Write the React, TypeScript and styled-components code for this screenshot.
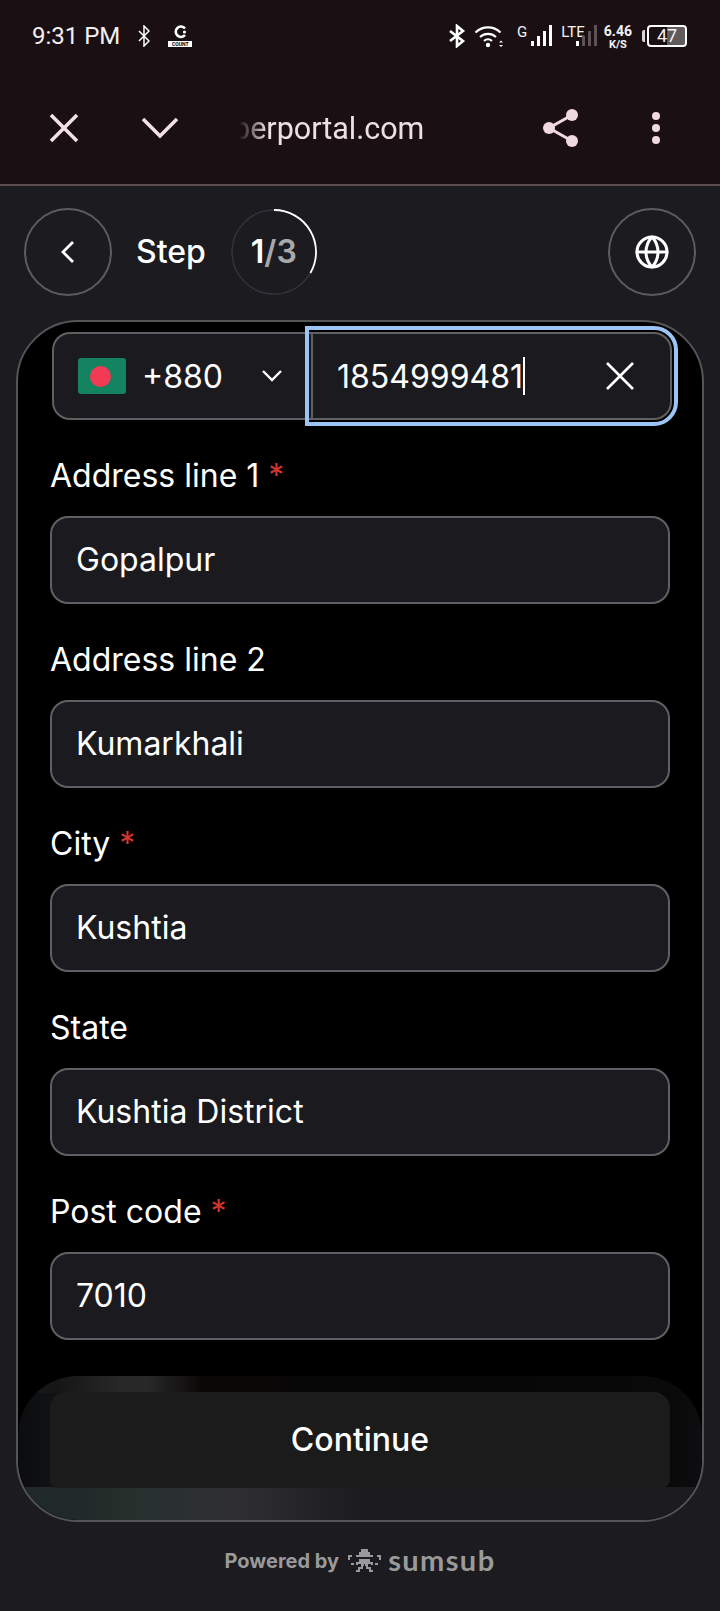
import React from "react";
import styled, { createGlobalStyle } from "styled-components";
import { Globe } from "lucide-react";

const GlobalStyle = createGlobalStyle`
  html, body {
    margin: 0;
    padding: 0;
    background: #1b1b20;
  }
  * {
    box-sizing: border-box;
  }
`;

const fields = [
  { label: "Address line 1", value: "Gopalpur", required: true },
  { label: "Address line 2", value: "Kumarkhali", required: false },
  { label: "City", value: "Kushtia", required: true },
  { label: "State", value: "Kushtia District", required: false },
  { label: "Post code", value: "7010", required: true },
];

const SignalBars = ({ dim }: { dim?: boolean }) => (
  <svg width="22" height="22" viewBox="0 0 22 22">
    <rect x="0" y="16" width="3" height="5" fill="#fff" />
    <rect x="6" y="11" width="3" height="10" fill={dim ? "#5c5356" : "#fff"} />
    <rect x="12" y="6" width="3" height="15" fill={dim ? "#5c5356" : "#fff"} />
    <rect x="18" y="0" width="3" height="21" fill={dim ? "#5c5356" : "#fff"} />
  </svg>
);

const SumsubMark = () => (
  <svg width="33" height="24" viewBox="0 0 33 24" fill="#9a9a9a">
    <path d="M13 0h7v3h2v3h3v2H8V6h3V3h2z" />
    <path d="M0 6h4v2H2v3H0zM29 6h4v5h-2V8h-2z" />
    <path d="M11 10h11v3h3v3h-2v-1h-3v3h3v3h2v2h-4v-3h-3v-3h-1v-2h-1v2h-1v3h-3v3H8v-2h2v-3h3v-3h-3v1H8v-3h3z" />
    <path d="M3 14h3v2H3zM27 14h3v2h-3z" />
  </svg>
);

const App: React.FC = () => {
  return (
    <Page>
      <GlobalStyle />
      <TopChrome>
        <StatusBar>
          <StatusGroup>
            <Clock>9:31 PM</Clock>
            <svg width="12" height="22" viewBox="0 0 12 22" fill="none">
              <path d="M1 6l10 10-5 5V1l5 5L1 16" stroke="#fff" strokeWidth="1.5" />
            </svg>
            <CountBadge>
              <svg width="16" height="14" viewBox="0 0 16 14" fill="none">
                <path d="M13 3.5A5.2 5.2 0 1 0 13 10" stroke="#fff" strokeWidth="2.6" />
                <circle cx="12.5" cy="7" r="1.6" fill="#fff" />
              </svg>
              <CountLabel>COUNT</CountLabel>
            </CountBadge>
          </StatusGroup>
          <StatusGroup $right>
            <svg width="18" height="24" viewBox="0 0 18 24" fill="none">
              <path d="M2 7l13 10-6 5V2l6 5L2 17" stroke="#fff" strokeWidth="2.6" />
            </svg>
            <svg width="30" height="24" viewBox="0 0 30 24" fill="none">
              <path d="M1.5 8.5a18 18 0 0 1 25 0" stroke="#fff" strokeWidth="2.2" />
              <path d="M6 13a12 12 0 0 1 16 0" stroke="#fff" strokeWidth="2.2" />
              <path d="M10 17a6 6 0 0 1 8 0" stroke="#fff" strokeWidth="2.2" />
              <circle cx="14" cy="21" r="2.2" fill="#fff" />
              <path d="M27 16.5l2 2h-4zM25 21h4l-2 2z" fill="#fff" />
            </svg>
            <NetworkItem $gap={4} $offset={5}>
              <NetworkName>G</NetworkName>
              <SignalBars />
            </NetworkItem>
            <NetworkItem $gap={-9} $offset={0}>
              <NetworkName>LTE</NetworkName>
              <SignalBars dim />
            </NetworkItem>
            <Speed>
              <SpeedValue>6.46</SpeedValue>
              <SpeedUnit>K/S</SpeedUnit>
            </Speed>
            <Battery>
              <BatteryLevel>47</BatteryLevel>
            </Battery>
          </StatusGroup>
        </StatusBar>
        <BrowserBar>
          <BrowserIcon $width={92}>
            <svg width="30" height="30" viewBox="0 0 30 30" fill="none">
              <path d="M2 2l26 26M28 2L2 28" stroke="#f5e1e5" strokeWidth="3.6" />
            </svg>
          </BrowserIcon>
          <BrowserIcon $width={52}>
            <svg width="38" height="24" viewBox="0 0 38 24" fill="none">
              <path d="M2 3l17 17L36 3" stroke="#f5e1e5" strokeWidth="3.6" />
            </svg>
          </BrowserIcon>
          <UrlBox>
            <UrlText>perportal.com</UrlText>
          </UrlBox>
          <BrowserIcon $width={38}>
            <svg width="38" height="40" viewBox="0 0 38 40" fill="none">
              <path d="M30 7L7 20l23 13" stroke="#f0d9df" strokeWidth="3" />
              <circle cx="30" cy="7" r="6" fill="#f0d9df" />
              <circle cx="7" cy="20" r="6" fill="#f0d9df" />
              <circle cx="30" cy="33" r="6" fill="#f0d9df" />
            </svg>
          </BrowserIcon>
          <KebabSlot>
            <Dot />
            <Dot />
            <Dot />
          </KebabSlot>
        </BrowserBar>
      </TopChrome>

      <StepHeader>
        <RoundButton>
          <svg width="16" height="26" viewBox="0 0 16 26" fill="none">
            <path d="M13 3L3 13l10 10" stroke="#fff" strokeWidth="2.8" />
          </svg>
        </RoundButton>
        <StepLabel>Step</StepLabel>
        <StepRing>
          <RingSvg width="86" height="88" viewBox="0 0 86 88" fill="none">
            <circle cx="43" cy="44" r="42" stroke="#33333a" strokeWidth="1.5" />
            <path d="M43 2A42 42 0 0 1 79.4 65" stroke="#fff" strokeWidth="1.8" />
          </RingSvg>
          <StepCurrent>1</StepCurrent>
          <StepTotal>/3</StepTotal>
        </StepRing>
        <RoundButton $end>
          <Globe size={36} color="#fff" strokeWidth={2} />
        </RoundButton>
      </StepHeader>

      <Card>
        <PhoneRow>
          <CountrySelect>
            <Flag>
              <FlagDisc />
            </Flag>
            <DialCode>+880</DialCode>
            <svg width="22" height="14" viewBox="0 0 22 14" fill="none">
              <path d="M2 2l9 9 9-9" stroke="#fff" strokeWidth="2.4" />
            </svg>
          </CountrySelect>
          <PhoneInput>
            <PhoneNumber>1854999481</PhoneNumber>
            <Caret />
            <svg width="30" height="30" viewBox="0 0 30 30" fill="none">
              <path d="M2 2l26 26M28 2L2 28" stroke="#fff" strokeWidth="2.6" />
            </svg>
          </PhoneInput>
        </PhoneRow>
        {fields.map((field) => (
          <Field key={field.label}>
            <Label>
              {field.label}
              {field.required && <Required>*</Required>}
            </Label>
            <Input>{field.value}</Input>
          </Field>
        ))}
        <ActionDock>
          <ContinueButton>Continue</ContinueButton>
        </ActionDock>
      </Card>

      <PoweredBy>
        <PoweredText>Powered by</PoweredText>
        <SumsubMark />
        <Wordmark>sumsub</Wordmark>
      </PoweredBy>
    </Page>
  );
};

export default App;

const Page = styled.div`
  width: 720px;
  height: 1611px;
  display: flex;
  flex-direction: column;
  overflow: hidden;
  background: #1b1b20;
  color: #fff;
  font-family: Inter, "Liberation Sans", sans-serif;
`;

const TopChrome = styled.div`
  height: 186px;
  flex: none;
  background: #1a1013;
  border-bottom: 2px solid #5a4b4f;
  font-family: Roboto, "Liberation Sans", sans-serif;
`;

const StatusBar = styled.div`
  height: 72px;
  padding: 0 33px 0 32px;
  display: flex;
  align-items: center;
  justify-content: space-between;
`;

const StatusGroup = styled.div<{ $right?: boolean }>`
  display: flex;
  align-items: center;
  gap: ${(p) => (p.$right ? "8px" : "18px")};
`;

const Clock = styled.span`
  font-size: 24px;
  color: #f4f0f1;
`;

const CountBadge = styled.div`
  display: flex;
  flex-direction: column;
  align-items: center;
  gap: 2px;
  width: 24px;
`;

const CountLabel = styled.span`
  width: 24px;
  height: 6px;
  background: #fff;
  color: #000;
  font-size: 5px;
  line-height: 6px;
  font-weight: 700;
  text-align: center;
`;

const NetworkItem = styled.div<{ $gap: number; $offset: number }>`
  display: flex;
  align-items: flex-start;
  height: 22px;
  margin-left: ${(p) => p.$offset}px;

  svg {
    margin-left: ${(p) => p.$gap}px;
  }
`;

const NetworkName = styled.span`
  font-size: 15px;
  line-height: 14px;
  color: #f4f0f1;
`;

const Speed = styled.div`
  display: flex;
  flex-direction: column;
  align-items: center;
  margin-left: -2px;
  font-weight: 700;
  color: #f4f0f1;
`;

const SpeedValue = styled.span`
  font-size: 14px;
  line-height: 16px;
`;

const SpeedUnit = styled.span`
  font-size: 11px;
  line-height: 11px;
`;

const Battery = styled.div`
  position: relative;
  margin-left: 7px;
  width: 40px;
  height: 22px;
  border: 2px solid #fff;
  border-radius: 4px;
  display: flex;
  align-items: center;
  justify-content: center;
  background: linear-gradient(90deg, transparent 50%, #5f5a5c 50%);

  &::before {
    content: "";
    position: absolute;
    left: -7px;
    top: 3px;
    width: 3px;
    height: 12px;
    border-radius: 2px 0 0 2px;
    background: #d9d4d6;
  }
`;

const BatteryLevel = styled.span`
  font-size: 18px;
  line-height: 18px;
  color: #f4f0f1;
`;

const BrowserBar = styled.div`
  height: 112px;
  padding-left: 49px;
  display: flex;
  align-items: center;
`;

const BrowserIcon = styled.div<{ $width: number }>`
  width: ${(p) => p.$width}px;
  flex: none;
  display: flex;
  align-items: center;
`;

const UrlBox = styled.div`
  width: 349px;
  padding: 2px 0 0 40px;
  flex: none;
  overflow: hidden;
  mask-image: linear-gradient(90deg, transparent 46px, #000 74px);
`;

const UrlText = styled.span`
  font-size: 30.5px;
  line-height: 40px;
  color: #eedfe3;
`;

const KebabSlot = styled.div`
  margin-left: 72px;
  display: flex;
  flex-direction: column;
  gap: 4px;
`;

const Dot = styled.span`
  width: 8px;
  height: 8px;
  border-radius: 50%;
  background: #f0d9df;
`;

const StepHeader = styled.header`
  flex: none;
  height: 134px;
  padding: 22px 24px 0 24px;
  display: flex;
  align-items: flex-start;
`;

const RoundButton = styled.div<{ $end?: boolean }>`
  width: 88px;
  height: 88px;
  flex: none;
  border: 2px solid #5d5d60;
  border-radius: 50%;
  display: flex;
  align-items: center;
  justify-content: center;
  margin-left: ${(p) => (p.$end ? "auto" : "0")};
`;

const StepLabel = styled.span`
  margin-left: 24px;
  height: 87px;
  font-size: 32px;
  line-height: 87px;
  font-weight: 500;
`;

const StepRing = styled.div`
  position: relative;
  margin-left: 25px;
  width: 86px;
  height: 87px;
  display: flex;
  align-items: center;
  justify-content: center;
  font-size: 32px;
  font-weight: 600;
`;

const RingSvg = styled.svg`
  position: absolute;
  left: 0;
  top: 0;
`;

const StepCurrent = styled.span`
  color: #fff;
`;

const StepTotal = styled.span`
  color: #a9a9ab;
`;

const Card = styled.main`
  position: relative;
  flex: 1;
  margin: 0 16px;
  padding: 10px 32px 0 32px;
  background: #000;
  border: 2px solid #555558;
  border-radius: 62px;
  overflow: hidden;
`;

const PhoneRow = styled.div`
  display: flex;
  height: 88px;
  margin: 0 -2px 35px 2px;
`;

const CountrySelect = styled.div`
  width: 259px;
  padding: 0 28px 0 24px;
  display: flex;
  align-items: center;
  background: #1b1b1f;
  border: 2px solid #606063;
  border-right: none;
  border-radius: 18px 0 0 18px;

  svg {
    margin-left: auto;
  }
`;

const Flag = styled.div`
  width: 48px;
  height: 36px;
  padding-right: 4px;
  border-radius: 3px;
  background: #14835f;
  display: flex;
  align-items: center;
  justify-content: center;
`;

const FlagDisc = styled.span`
  width: 21px;
  height: 21px;
  border-radius: 50%;
  background: #f23a55;
`;

const DialCode = styled.span`
  margin-left: 16px;
  font-size: 32px;
`;

const PhoneInput = styled.div`
  flex: 1;
  padding: 0 35px 0 24px;
  display: flex;
  align-items: center;
  background: #1b1b1f;
  border: 2px solid #606063;
  border-radius: 0 18px 18px 0;
  outline: 4px solid #9cc4f5;
  outline-offset: 2px;

  svg {
    margin-left: auto;
  }
`;

const PhoneNumber = styled.span`
  font-size: 32px;
`;

const Caret = styled.span`
  width: 2px;
  height: 38px;
  background: #fff;
`;

const Field = styled.div`
  margin-bottom: 35px;
`;

const Label = styled.div`
  height: 40px;
  margin-bottom: 21px;
  font-size: 32px;
  line-height: 42px;
`;

const Required = styled.span`
  margin-left: 9px;
  color: #d0352f;
`;

const Input = styled.div`
  height: 88px;
  padding: 0 24px 2px;
  display: flex;
  align-items: center;
  font-size: 32px;
  background: #1b1b1f;
  border: 2px solid #606063;
  border-radius: 18px;
`;

const ActionDock = styled.div`
  position: absolute;
  left: 0;
  right: 0;
  bottom: 0;
  height: 144px;
  padding: 16px 32px 32px;
  border-radius: 60px;
  overflow: hidden;
  background:
    linear-gradient(90deg, #1f2a28 8%, #25302d 16%, #2f2f33 32%, #1b1b20 50%, #1c1c20 100%) bottom / 100% 33px no-repeat,
    linear-gradient(90deg, #161616 6%, #282828 15%, #282828 19%, #0a0807 27%, #060606 60%, #0a0a0b 100%) top / 100% 17px no-repeat,
    linear-gradient(90deg, #0a0c0d 0, #101213 5%, #050505 50%, #050505 92%, #0e0e10 100%);
`;

const ContinueButton = styled.div`
  height: 96px;
  padding-bottom: 2px;
  display: flex;
  align-items: center;
  justify-content: center;
  background: #1b1b1b;
  border-radius: 16px 16px 8px 8px;
  font-size: 32px;
  font-weight: 500;
`;

const PoweredBy = styled.footer`
  flex: none;
  height: 89px;
  padding-bottom: 12px;
  display: flex;
  align-items: center;
  justify-content: center;
  color: #9a9a9a;
`;

const PoweredText = styled.span`
  margin-right: 9px;
  font-size: 20px;
  font-weight: 700;
`;

const Wordmark = styled.span`
  margin: -2px 0 0 7px;
  font-family: Lato, "Noto Sans", sans-serif;
  font-size: 29px;
  line-height: 28px;
  font-weight: 700;
  letter-spacing: 1.4px;
`;
